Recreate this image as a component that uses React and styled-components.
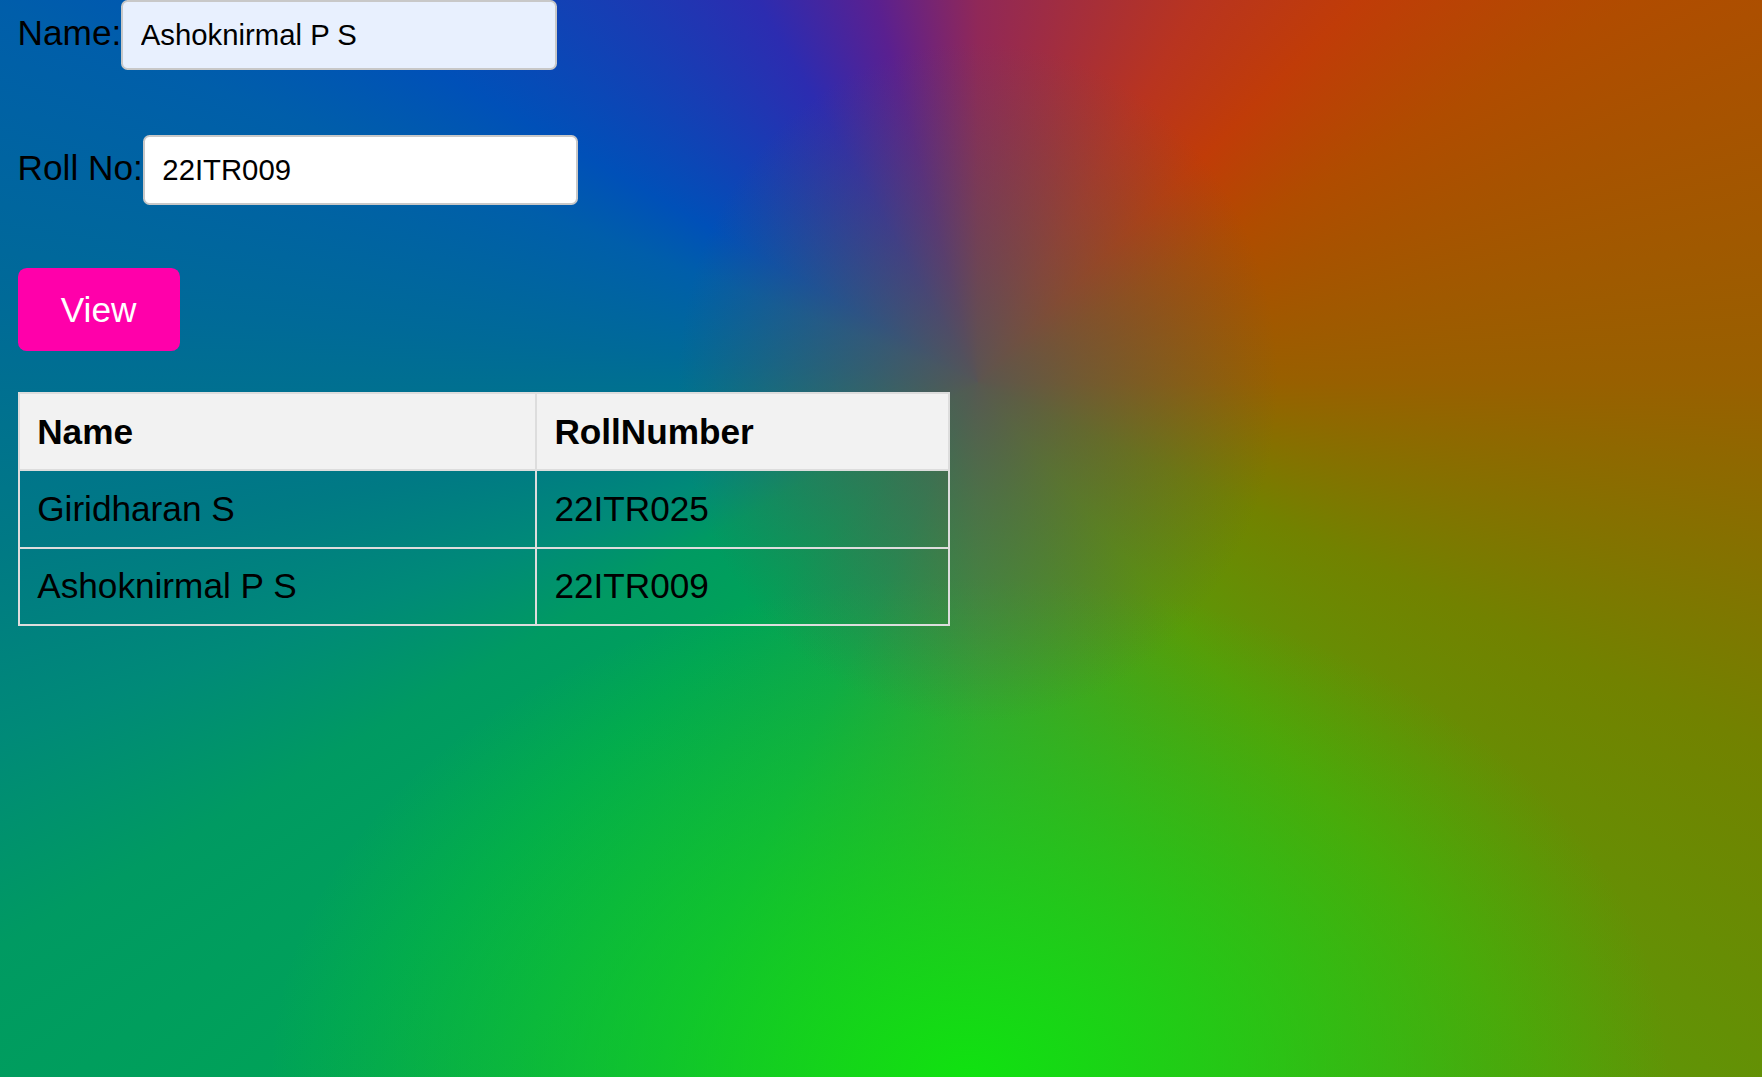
import React from "react";
import styled, { createGlobalStyle } from "styled-components";

const GlobalStyle = createGlobalStyle`
  html, body {
    margin: 0;
    padding: 0;
  }

  body {
    font-family: "Liberation Sans", Arial, sans-serif;
    color: #000;
  }
`;

// background: a colour wheel around a muddy centre, green glow at the bottom
const Page = styled.div`
  min-height: 100vh;
  box-sizing: border-box;
  padding: 0 17.6px;
  background:
    radial-gradient(ellipse 300px 340px at 55.5% 35.5%, rgba(88, 86, 82, 0.97) 0%, rgba(88, 86, 82, 0.6) 35%, rgba(88, 86, 82, 0) 100%),
    radial-gradient(ellipse 700px 500px at 55% 100%, rgba(16, 226, 16, 1) 0%, rgba(16, 226, 16, 0.55) 45%, rgba(16, 226, 16, 0) 100%),
    conic-gradient(
      from 0deg at 55.5% 35.5%,
      #902858 0deg,
      #b83420 30deg,
      #c03c08 45deg,
      #b04c00 60deg,
      #a85200 69deg,
      #986000 90deg,
      #728200 115deg,
      #5c9808 140deg,
      #4a9a20 160deg,
      #3a9a38 180deg,
      #10a050 205deg,
      #00a258 225deg,
      #009a62 240deg,
      #008a78 250deg,
      #007a84 260deg,
      #006a98 275deg,
      #005eaa 291deg,
      #0050b8 300deg,
      #2c2cb0 330deg,
      #5a2090 345deg,
      #902858 360deg
    );
`;

const Field = styled.div`
  display: flex;
  align-items: baseline;
  margin-bottom: ${(p) => p.$gap}px;
`;

const Label = styled.label`
  font-size: 35.2px;
`;

const Input = styled.input`
  box-sizing: border-box;
  width: 435.6px;
  height: 70.4px;
  padding: 0 17.6px;
  font-family: "Liberation Sans", Arial, sans-serif;
  font-size: 29.3px;
  color: #000;
  background: ${(p) => (p.$filled ? "#e8f0fe" : "#fff")};
  border: 2.2px solid #c8c8c8;
  border-radius: 6.6px;
  outline: none;
`;

const ViewButton = styled.button`
  display: block;
  width: 162px;
  height: 83px;
  padding: 0;
  margin-bottom: 41px;
  font-family: "Liberation Sans", Arial, sans-serif;
  font-size: 35.2px;
  color: #fff;
  background: #ff00aa;
  border: none;
  border-radius: 8.8px;
  cursor: pointer;
`;

const Table = styled.table`
  width: 932px;
  border-collapse: collapse;
  font-size: 35.2px;
`;

const Th = styled.th`
  width: ${(p) => p.$width || "auto"};
  padding: 17.6px;
  text-align: left;
  font-weight: bold;
  background: #f2f2f2;
  border: 2.2px solid #ddd;
`;

const Td = styled.td`
  padding: 17.6px;
  text-align: left;
  border: 2.2px solid #ddd;
`;

const students = [
  { name: "Giridharan S", roll: "22ITR025" },
  { name: "Ashoknirmal P S", roll: "22ITR009" },
];

const App = () => {
  return (
    <>
      <GlobalStyle />
      <Page>
        <Field $gap={64.3}>
          <Label htmlFor="name">Name:</Label>
          <Input id="name" $filled defaultValue="Ashoknirmal P S" />
        </Field>

        <Field $gap={63.2}>
          <Label htmlFor="roll">Roll No:</Label>
          <Input id="roll" defaultValue="22ITR009" />
        </Field>

        <ViewButton>View</ViewButton>

        <Table>
          <thead>
            <tr>
              <Th $width="480px">Name</Th>
              <Th>RollNumber</Th>
            </tr>
          </thead>
          <tbody>
            {students.map((s) => (
              <tr key={s.roll}>
                <Td>{s.name}</Td>
                <Td>{s.roll}</Td>
              </tr>
            ))}
          </tbody>
        </Table>
      </Page>
    </>
  );
};

export default App;
